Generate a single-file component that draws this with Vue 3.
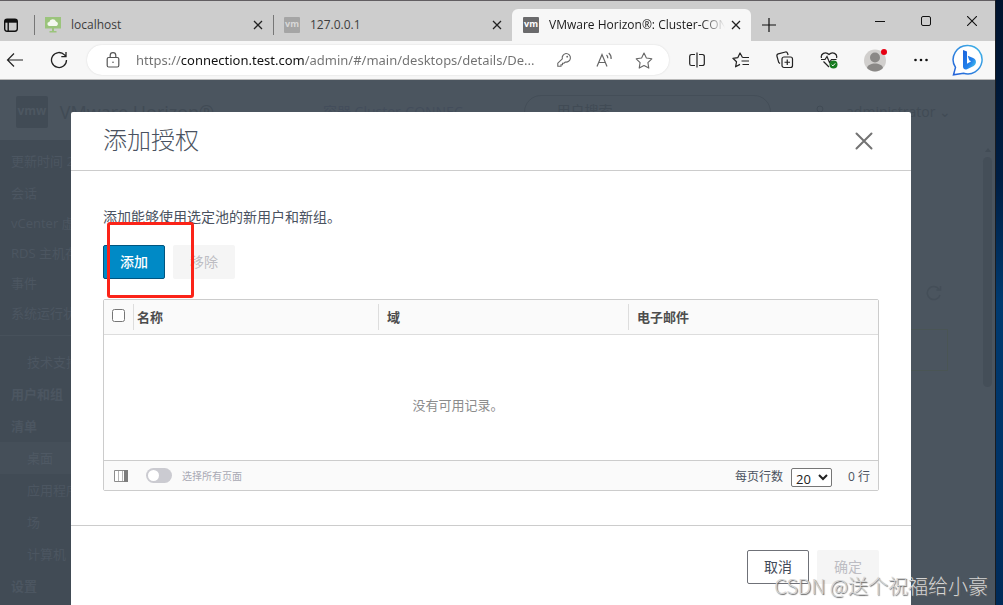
<script setup>
import { ref } from 'vue'

const tabs = [
  { title: 'localhost', kind: 'cloud', active: false },
  { title: '127.0.0.1', kind: 'vm', active: false },
  { title: 'VMware Horizon®: Cluster-CONN', kind: 'vm', active: true },
]

const url = ref('https://connection.test.com/admin/#/main/desktops/details/De...')

const monitorLinks = ['会话', 'vCenter 虚拟机', 'RDS 主机存储', '事件', '系统运行状况']
const navLinks = [
  { text: '技术支持', sub: true },
  { text: '用户和组', head: true },
  { text: '清单', head: true },
  { text: '桌面', sub: true, current: true },
  { text: '应用程序', sub: true },
  { text: '场', sub: true },
  { text: '计算机', sub: true },
  { text: '设置', head: true },
]

const columns = ['名称', '域', '电子邮件']
const allChecked = ref(false)
const pageSize = ref('20')
</script>

<template>
  <div class="desktop">
    <div class="window">
      <header class="tabstrip">
        <button class="tab-actions" aria-label="Tab actions">
          <svg width="16" height="16" viewBox="0 0 16 16" fill="none" stroke="#111" stroke-width="1.4">
            <rect x="1.7" y="2.2" width="12.6" height="12" rx="2.4" />
            <path d="M2 4h12" stroke-width="3.4" />
            <path d="M5.2 5v9" />
          </svg>
        </button>
        <div v-for="tab in tabs" :key="tab.title" class="tab" :class="{ active: tab.active }">
          <svg v-if="tab.kind === 'cloud'" class="favicon" width="16" height="16" viewBox="0 0 16 16">
            <path d="M0 0h16v11.500H0z" fill="#9bc47c" />
            <path d="M7 11h2v3h2.500v1.500h-7V14H7z" fill="#9bc47c" />
            <path d="M4.500 9a2 2 0 0 1-.2-4A3.500 3.500 0 0 1 11 4.600 2.300 2.300 0 0 1 11.500 9z" fill="#f4f8f0" />
          </svg>
          <span v-else class="favicon vm">vm</span>
          <span class="tab-title">{{ tab.title }}</span>
          <button class="tab-close" aria-label="Close tab">
            <svg width="10" height="10" viewBox="0 0 10 10" stroke="#222" stroke-width="1.3">
              <path d="M1 1l8 8M9 1L1 9" />
            </svg>
          </button>
        </div>
        <button class="new-tab" aria-label="New tab">
          <svg width="14" height="14" viewBox="0 0 14 14" stroke="#111" stroke-width="1.2">
            <path d="M7 0v14M0 7h14" />
          </svg>
        </button>
        <div class="window-controls">
          <button aria-label="Minimize">
            <svg width="10" height="10" viewBox="0 0 10 10" stroke="#111"><path d="M0 5.500h10" /></svg>
          </button>
          <button aria-label="Maximize">
            <svg width="10" height="10" viewBox="0 0 10 10" fill="none" stroke="#111"><rect x=".5" y=".5" width="9" height="9" rx="1.500" /></svg>
          </button>
          <button aria-label="Close">
            <svg width="10" height="10" viewBox="0 0 10 10" stroke="#111" stroke-width="1.1"><path d="M0 0l10 10M10 0L0 10" /></svg>
          </button>
        </div>
      </header>

      <nav class="toolbar">
        <button class="nav-btn back" aria-label="Back">
          <svg width="18" height="16" viewBox="0 0 18 16" fill="none" stroke="#222" stroke-width="1.2">
            <path d="M17 8H1.500M8 1.500L1.500 8 8 14.500" />
          </svg>
        </button>
        <button class="nav-btn reload" aria-label="Refresh">
          <svg width="18" height="18" viewBox="0 0 18 18" fill="none" stroke="#222" stroke-width="1.3">
            <path d="M16.500 9A7.500 7.500 0 1 1 14.500 3.900L16 5.500M16 1v4.700h-4.700" />
          </svg>
        </button>
        <div class="address">
          <button class="lock" aria-label="Site information">
            <svg width="14" height="16" viewBox="0 0 14 16" fill="none" stroke="#555" stroke-width="1.2">
              <rect x="1.200" y="5.500" width="11.600" height="9.500" rx="1.500" />
              <path d="M4.200 5.500V3.500a2.800 2.800 0 0 1 5.600 0v2" />
              <circle cx="7" cy="10.200" r=".8" fill="#555" stroke="none" />
            </svg>
          </button>
          <input v-model="url" class="url" type="text" aria-label="Address" spellcheck="false" />
          <button class="addr-btn" aria-label="Saved passwords">
            <svg width="16" height="16" viewBox="0 0 16 16" fill="none" stroke="#666" stroke-width="1.1">
              <path d="M10 1.500a4.300 4.300 0 1 1-.8 8.500L8 11.200H6.500v1.500H5v1.500H1.800v-3L6.300 6.800A4.400 4.400 0 0 1 10 1.500z" />
              <circle cx="11.200" cy="4.700" r=".9" fill="#666" stroke="none" />
            </svg>
          </button>
          <button class="addr-btn" aria-label="Read aloud">
            <svg width="18" height="16" viewBox="0 0 18 16" fill="none" stroke="#666" stroke-width="1.2">
              <path d="M2 14.500L7 2.500l5 12M3.800 10.500h6.400M11.500 3c1 .9 1.400 2 1.300 3.300M13.800 1c1.700 1.500 2.600 3.600 2.300 6" />
            </svg>
          </button>
          <button class="addr-btn" aria-label="Add to favorites">
            <svg width="18" height="17" viewBox="0 0 18 17" fill="none" stroke="#666" stroke-width="1.1" stroke-linejoin="round">
              <path d="M9 1l2.400 5 5.400.8-3.900 3.900.9 5.400L9 13.500l-4.800 2.600.9-5.400L1.200 6.800l5.400-.8z" />
            </svg>
          </button>
        </div>
        <div class="tools">
          <button aria-label="Split screen">
            <svg width="16" height="16" viewBox="0 0 16 16" fill="none" stroke="#222" stroke-width="1.2">
              <path d="M6 2.500H2.500a1.800 1.800 0 0 0-1.800 1.800v7.400a1.800 1.800 0 0 0 1.800 1.800H6M10 2.500h3.500a1.800 1.800 0 0 1 1.800 1.800v7.400a1.800 1.800 0 0 1-1.800 1.800H10M8 .5v15" />
            </svg>
          </button>
          <button aria-label="Favorites">
            <svg width="18" height="16" viewBox="0 0 18 16" fill="none" stroke="#222" stroke-width="1.2" stroke-linejoin="round">
              <path d="M10.500 5.500L8 1 5.900 5.600l-5 .7 3.600 3.500-.9 5L8 12.400M10.500 5.500H17M9.500 9h7.500M10.500 12.500H17" />
            </svg>
          </button>
          <button aria-label="Collections">
            <svg width="18" height="18" viewBox="0 0 18 18" fill="none" stroke="#222" stroke-width="1.2">
              <rect x="6" y="6" width="10.500" height="10.500" rx="2" />
              <path d="M11.250 8.500v5.500M8.500 11.250H14M4 12.500L2.700 11.500.9 5A1.800 1.800 0 0 1 2.200 2.900L9.500 1a1.800 1.800 0 0 1 2 1.200l.6 1.800" />
            </svg>
          </button>
          <button aria-label="Browser essentials">
            <svg width="18" height="18" viewBox="0 0 18 18" fill="none" stroke="#222" stroke-width="1.200">
              <path d="M1.500 7C.2 3 5.500-.2 9 3.500 12.500-.2 17.800 3 16.500 7M3.500 10.500L9 16M1 8.500h4L7 5.500l2.500 6L11.500 8.500h5" />
              <circle cx="13.500" cy="13.500" r="4" fill="#167c1f" stroke="none" />
              <path d="M11.700 13.700l1.200 1.200 2.300-2.500" stroke="#fff" stroke-width="1" />
            </svg>
          </button>
          <button class="profile" aria-label="Profile">
            <svg width="24" height="24" viewBox="0 0 24 24">
              <circle cx="12" cy="12.500" r="11" fill="#d1cfcd" />
              <circle cx="12" cy="9.500" r="5" fill="#8a8886" />
              <path d="M4 20c1-6 15-6 16 0a11 11 0 0 1-16 0z" fill="#8a8886" />
              <circle cx="21" cy="4" r="3" fill="#e60012" />
            </svg>
          </button>
          <button aria-label="Settings and more">
            <svg width="14" height="4" viewBox="0 0 14 4" fill="#111">
              <circle cx="1.500" cy="2" r="1.300" /><circle cx="7" cy="2" r="1.300" /><circle cx="12.500" cy="2" r="1.300" />
            </svg>
          </button>
          <button class="bing" aria-label="Bing">
            <svg width="32" height="32" viewBox="0 0 32 32">
              <defs>
                <linearGradient id="ring" x1="1" y1="0" x2="0" y2="1">
                  <stop offset="0" stop-color="#41b8e8" /><stop offset="1" stop-color="#2360d8" />
                </linearGradient>
                <linearGradient id="bee" x1="0" y1="0" x2="1" y2="1">
                  <stop offset="0" stop-color="#1b62dd" /><stop offset=".6" stop-color="#2381ea" /><stop offset="1" stop-color="#4cd5ee" />
                </linearGradient>
              </defs>
              <path d="M16.500 1.500a14.200 14.200 0 1 1-5 27.700L1.500 30.800l2-7.400A14.200 14.200 0 0 1 16.500 1.500z" fill="#fff" stroke="url(#ring)" stroke-width="1.500" />
              <path d="M11 6l4 1.500v12.300l4.200-2.500-2-1-1.500-4.500 5.500 2.300c2.500 1.200 3.500 3.500 2.300 6-.4.800-1 1.400-1.800 1.900L15 25.300c-2 1-4-.5-4-2.500z" fill="url(#bee)" />
            </svg>
          </button>
        </div>
      </nav>

      <main class="viewport">
        <div class="console">
          <div class="console-bar">
            <span class="logo">vmw</span>
            <span class="product">VMware Horizon®</span>
            <span class="pod">容器 Cluster-CONNEC</span>
            <span class="search">用户搜索</span>
            <svg class="person" width="10" height="14" viewBox="0 0 10 14" fill="none" stroke="#414b55"><circle cx="5" cy="4" r="3" /><path d="M1 13c0-6 8-6 8 0" /></svg>
            <span class="account">administrator ⌄</span>
          </div>
          <div class="console-body">
            <aside class="sidebar">
              <div class="updated">更新时间 2023</div>
              <ul class="monitor">
                <li v-for="link in monitorLinks" :key="link">{{ link }}</li>
              </ul>
              <ul class="links">
                <li v-for="link in navLinks" :key="link.text" :class="{ sub: link.sub, head: link.head, current: link.current }">{{ link.text }}</li>
              </ul>
            </aside>
            <section class="content">
              <svg class="reload-ghost" width="16" height="16" viewBox="0 0 16 16" fill="none" stroke="#444e58" stroke-width="1.500">
                <path d="M14 10A6.500 6.500 0 1 1 13 4.200M14.500 1v4h-4" />
              </svg>
              <div class="panel"></div>
            </section>
            <div class="scroll"><span class="arrow"></span><span class="thumb"></span></div>
          </div>
        </div>

        <div class="overlay">
          <section class="modal" role="dialog" aria-labelledby="dialog-title">
            <header class="modal-head">
              <h1 id="dialog-title">添加授权</h1>
              <button class="dismiss" aria-label="关闭">
                <svg width="18" height="18" viewBox="0 0 18 18" stroke="#737373" stroke-width="2" stroke-linecap="round">
                  <path d="M1.500 1.500l15 15M16.500 1.500l-15 15" />
                </svg>
              </button>
            </header>
            <div class="modal-body">
              <p>添加能够使用选定池的新用户和新组。</p>
              <div class="actions">
                <button class="btn primary">添加</button>
                <button class="btn" disabled>移除</button>
                <span class="marker"></span>
              </div>
              <div class="grid">
                <table>
                  <thead>
                    <tr>
                      <th class="pick"><input v-model="allChecked" type="checkbox" aria-label="全选" /></th>
                      <th v-for="column in columns" :key="column"><span>{{ column }}</span></th>
                    </tr>
                  </thead>
                  <tbody>
                    <tr>
                      <td colspan="4">没有可用记录。</td>
                    </tr>
                  </tbody>
                </table>
                <div class="grid-foot">
                  <button class="columns-btn" aria-label="列">
                    <svg width="14" height="12" viewBox="0 0 14 12">
                      <path d="M.5.5h13v11H.5z" fill="#fff" stroke="#8c8c8c" />
                      <path d="M4.500 1v10M8.500 1v10" stroke="#b5b5b5" />
                      <path d="M10 0H14v12H10z" fill="#7d7d7d" />
                    </svg>
                  </button>
                  <label class="toggle"><input type="checkbox" disabled /><span>选择所有页面</span></label>
                  <label class="page-size"><span>每页行数</span>
                    <select v-model="pageSize"><option>20</option><option>50</option><option>100</option></select>
                  </label>
                  <span class="rows">0 行</span>
                </div>
              </div>
            </div>
            <footer class="modal-foot">
              <button class="btn outline">取消</button>
              <button class="btn" disabled>确定</button>
            </footer>
          </section>
        </div>
      </main>
    </div>
    <div class="wallpaper"></div>
    <div class="watermark">CSDN @送个祝福给小豪</div>
  </div>
</template>

<style>
body {
  margin: 0;
  overflow: hidden;
}
</style>

<style scoped>
* {
  box-sizing: border-box;
}
button {
  display: flex;
  align-items: center;
  justify-content: center;
  padding: 0;
  border: 0;
  background: none;
  font-family: inherit;
}
.desktop {
  position: relative;
  display: grid;
  grid-template-columns: 1fr 8px;
  height: 100vh;
  overflow: hidden;
  font-family: "Open Sans", "Noto Sans CJK SC", sans-serif;
}
.window {
  display: flex;
  flex-direction: column;
  min-width: 0;
  min-height: 0;
}
.wallpaper {
  border-left: 1px solid #1a1d22;
  background: linear-gradient(#00132d, #001f45 30%, #003a70 50%, #003367 80%, #002a58);
}

.tabstrip {
  display: flex;
  flex: none;
  height: 41px;
  padding-top: 8px;
  border-top: 1px solid #625e62;
  background: #cdcdcd;
}
.tab-actions {
  width: 34px;
  padding-right: 12px;
}
.tab {
  display: flex;
  flex: 0 1 239px;
  align-items: center;
  min-width: 0;
  padding: 0 10px 0 11px;
  background: linear-gradient(#777, #777) 0 6px / 1px 20px no-repeat;
}
.tab.active {
  border-radius: 6px 6px 0 0;
  background: #f7f7f7;
}
.favicon {
  flex: none;
  width: 16px;
  height: 16px;
}
.vm {
  border-radius: 1px;
  background: #a5a5a5;
  color: #d8d8d8;
  font-size: 9px;
  font-weight: 700;
  line-height: 14px;
  text-align: center;
}
.active .vm {
  background: #6a6a6c;
  color: #fff;
}
.tab-title {
  flex: 1;
  min-width: 0;
  margin: 0 2px 0 10px;
  color: #3d3d3d;
  font-size: 12px;
  line-height: 20px;
  white-space: nowrap;
}
.active .tab-title {
  color: #1a1a1a;
  mask-image: linear-gradient(90deg, #000 calc(100% - 28px), transparent calc(100% - 4px));
}
.new-tab {
  width: 35px;
}
.window-controls {
  display: flex;
  height: 24px;
  margin-left: auto;
}
.window-controls button {
  width: 46px;
}

.toolbar {
  display: flex;
  flex: none;
  align-items: center;
  height: 39px;
  border-bottom: 1px solid #b9b9b9;
  background: #f7f7f7;
}
.back {
  width: 30px;
}
.reload {
  width: 57px;
}
.address {
  display: flex;
  flex: 1;
  align-items: center;
  min-width: 0;
  height: 30px;
  padding: 0 5px 0 19px;
  border-radius: 15px;
  background: #fff;
  box-shadow: 0 0 2px #0002;
}
.lock {
  width: 14px;
}
.url {
  flex: 1;
  min-width: 0;
  margin-left: 16px;
  padding: 0;
  border: 0;
  outline: 0;
  background: linear-gradient(90deg, #707070 45px, #111 45px 169px, #707070 169px);
  background-clip: text;
  color: transparent;
  font-family: "Noto Sans", sans-serif;
  font-size: 13px;
  line-height: 20px;
}
.addr-btn {
  width: 40px;
  height: 30px;
}
.tools {
  display: flex;
  align-items: center;
  margin-left: 6px;
  padding-right: 2px;
}
.tools button {
  width: 44px;
}
.tools .profile {
  width: 48px;
}
.tools .bing {
  width: 50px;
}

.viewport {
  position: relative;
  flex: 1;
  min-height: 0;
  overflow: hidden;
}
.console {
  display: flex;
  flex-direction: column;
  height: 100%;
  background: #4b555f;
  color: #414b55;
}
.console-bar {
  display: flex;
  flex: none;
  align-items: center;
  height: 60px;
  padding: 4px 44px 0 16px;
  font-size: 14px;
  line-height: 20px;
}
.logo {
  width: 32px;
  height: 32px;
  border-radius: 2px;
  background: #414b55;
  color: #4d5761;
  font-size: 12px;
  font-weight: 700;
  line-height: 30px;
  text-align: center;
}
.product {
  width: 265px;
  margin-left: 12px;
  font-size: 18px;
}
.pod {
  width: 202px;
  color: #434d5b;
  white-space: nowrap;
}
.search {
  width: 249px;
  height: 34px;
  padding-left: 32px;
  border: 1px solid #444e58;
  border-radius: 17px;
  line-height: 30px;
}
.person {
  margin-left: 44px;
}
.account {
  margin-left: 21px;
  white-space: nowrap;
}
.console-body {
  display: flex;
  flex: 1;
  min-height: 0;
}
.sidebar {
  flex: none;
  width: 240px;
  overflow: hidden;
  background: #414b55;
  color: #4c5661;
  font-size: 13px;
}
.updated {
  padding: 6px 11px 2px;
  line-height: 30px;
}
ul {
  margin: 0;
  padding: 0;
  list-style: none;
}
.monitor {
  padding-bottom: 7px;
  border-bottom: 1px solid #47515b;
}
.monitor li {
  padding-left: 11px;
  line-height: 30px;
}
.links {
  padding-top: 10px;
}
.links li {
  padding-left: 11px;
  line-height: 32px;
}
.links .sub {
  padding-left: 27px;
}
.links .head {
  font-weight: 700;
}
.links .current {
  background: #454f59;
  color: #4f5964;
}
.content {
  display: flex;
  flex: 1;
  flex-direction: column;
  align-items: flex-end;
  padding: 145px 34px 0 24px;
}
.reload-ghost {
  margin-right: 6px;
}
.panel {
  width: 100%;
  height: 42px;
  margin-top: 28px;
  border: 1px solid #4a5555;
}
.scroll {
  display: flex;
  flex-direction: column;
  gap: 5px;
  align-items: center;
  width: 13px;
  padding: 8px 2px 0 0;
}
.arrow {
  border: 3px solid transparent;
  border-top: 0;
  border-bottom: 4px solid #424c56;
}
.thumb {
  width: 9px;
  height: 230px;
  border-radius: 5px;
  background: #444e58;
}

.overlay {
  position: absolute;
  inset: 0;
  display: flex;
  align-items: flex-start;
  justify-content: center;
  padding: 32px 13px 0 0;
}
.modal {
  width: 840px;
  max-width: 100%;
  border-radius: 2px;
  background: #fff;
  color: #4a5260;
}
.modal-head {
  display: flex;
  align-items: center;
  justify-content: space-between;
  height: 59px;
  padding: 0 38px 0 32px;
  border-bottom: 1px solid #ccc;
}
h1 {
  margin: 0;
  padding-bottom: 2px;
  font-size: 24px;
  font-weight: 300;
  line-height: 32px;
}
.modal-body {
  padding: 36px 32px 34px;
}
p {
  margin: 0 0 18px;
  font-size: 14px;
  line-height: 20px;
}
.actions {
  position: relative;
  display: flex;
  gap: 8px;
  margin-bottom: 20px;
}
.btn {
  width: 62px;
  height: 34px;
  border-radius: 2px;
  font-size: 14px;
  line-height: 20px;
}
.btn:disabled {
  background: #f5f5f5;
  color: #bdbdc3;
}
.btn.primary {
  border: 1px solid #005580;
  background: #008ac6;
  color: #fff;
  font-weight: 500;
}
.btn.outline {
  border: 1px solid #6f7178;
  background: #fff;
  color: #424a58;
}
.marker {
  position: absolute;
  top: -23px;
  left: 4px;
  width: 87px;
  height: 76px;
  border: 3px solid #fb2318;
  border-radius: 3px;
}
.grid {
  border: 1px solid #ccc;
  border-radius: 2px;
}
table {
  width: 100%;
  border-spacing: 0;
  table-layout: fixed;
  font-size: 13px;
}
th {
  height: 35px;
  padding: 0;
  border-bottom: 1px solid #ddd;
  background: #fafafa;
  color: #4d4d4d;
  font-weight: 700;
  text-align: left;
}
th span {
  display: block;
  padding-left: 8px;
  border-left: 1px solid #ddd;
  line-height: 26px;
}
.pick {
  width: 29px;
  text-align: center;
}
.pick + th {
  width: 245px;
}
.pick + th span {
  padding-left: 3px;
}
.pick input {
  display: block;
  width: 13px;
  height: 13px;
  margin: 0 auto 4px;
}
td {
  height: 125px;
  padding: 14px 66px 0 0;
  color: #8c8c8c;
  text-align: center;
}
.grid-foot {
  display: flex;
  align-items: center;
  height: 30px;
  padding: 0 8px 0 10px;
  border-top: 1px solid #ccc;
  background: #fafafa;
  font-size: 12px;
}
.toggle {
  display: flex;
  align-items: center;
  gap: 10px;
  margin-left: 18px;
  color: #a9a9b4;
  font-size: 10px;
}
.toggle input {
  display: flex;
  align-items: center;
  width: 26px;
  height: 15px;
  margin: 0;
  padding: 2px;
  border-radius: 8px;
  appearance: none;
  background: #cbcbd1;
}
.toggle input::before {
  width: 11px;
  height: 11px;
  border-radius: 50%;
  background: #fff;
  content: "";
}
.page-size {
  display: flex;
  align-items: center;
  gap: 8px;
  margin-left: auto;
}
select {
  width: 41px;
  height: 19px;
  margin-top: 3px;
  padding: 0;
  border: 1px solid #767676;
  border-radius: 2px;
  background: #fff;
  color: #222;
  font-family: inherit;
  font-size: 13px;
}
.rows {
  margin-left: 16px;
}
.modal-foot {
  display: flex;
  gap: 8px;
  justify-content: flex-end;
  padding: 24px 32px;
  border-top: 1px solid #ccc;
}
.watermark {
  position: absolute;
  right: 15px;
  bottom: 6px;
  color: #d4d4d4;
  font-family: "Noto Sans CJK SC", sans-serif;
  font-size: 20px;
  font-weight: 300;
  line-height: 26px;
  text-shadow: 1px 1px 1px #666;
}
</style>
